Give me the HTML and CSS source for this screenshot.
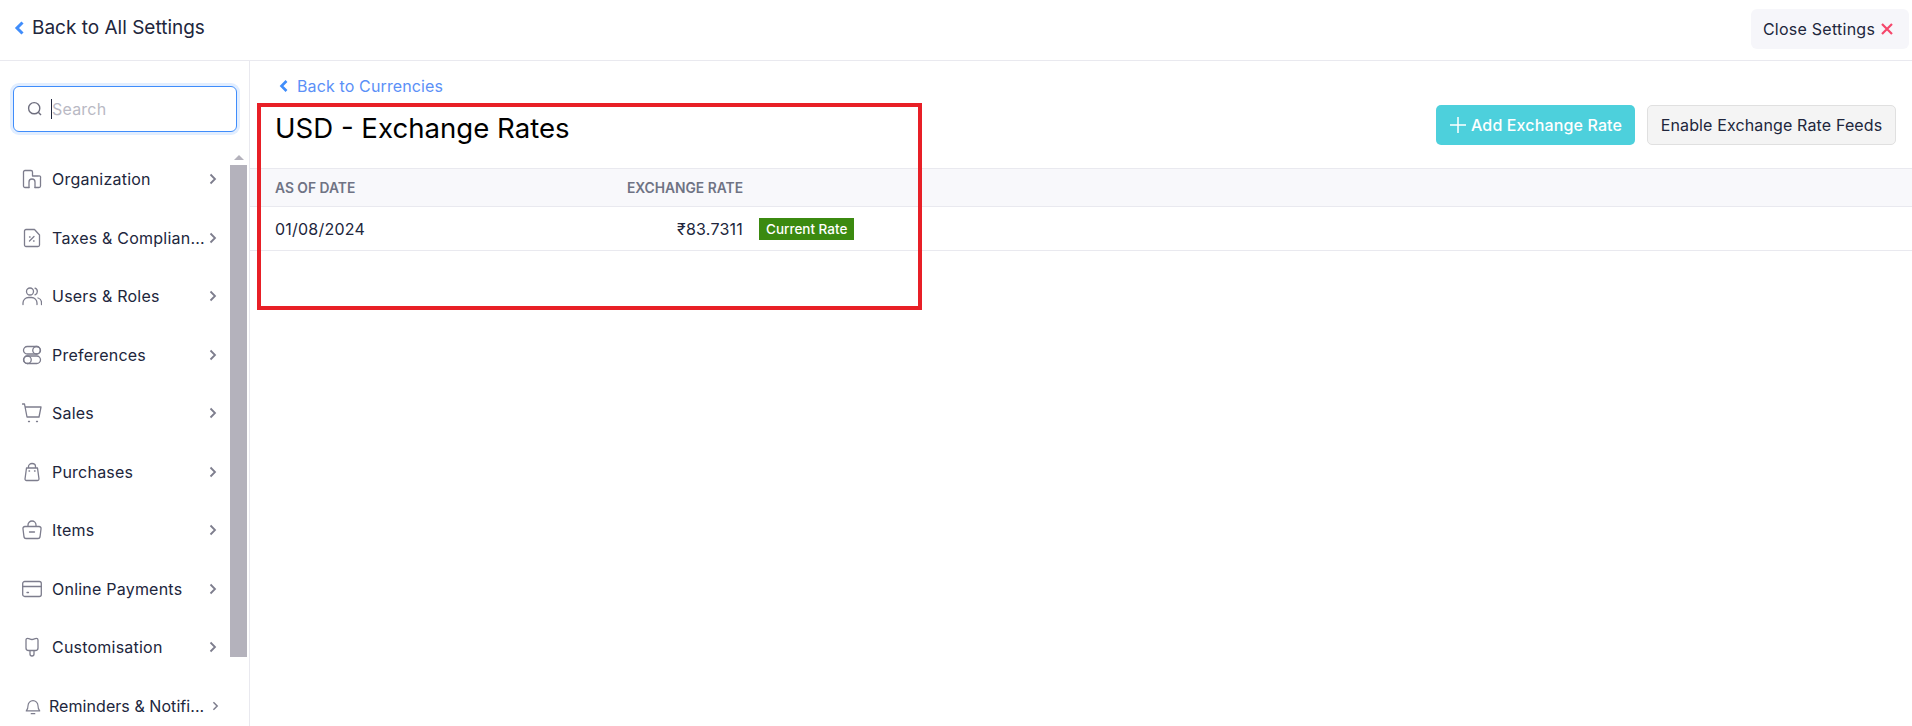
FILE: index.html
```html
<!DOCTYPE html>
<html lang="en">
<head>
<meta charset="utf-8">
<title>USD - Exchange Rates</title>
<link rel="stylesheet" href="styles.css">
</head>
<body>
<header class="topbar">
  <a class="back-all"><svg class="chev-blue" width="10" height="14" viewBox="0 0 10 14"><path d="M8.500 1.500 3 7l5.500 5.500" fill="none" stroke="#408dfb" stroke-width="3"/></svg>Back to All Settings</a>
  <button class="close-btn">Close Settings<svg width="12" height="12" viewBox="0 0 12 12"><path d="M1 1l10 10M11 1 1 11" fill="none" stroke="#f5476b" stroke-width="2.200"/></svg></button>
</header>
<div class="layout">
  <aside class="sidebar">
    <div class="search-wrap">
      <div class="search">
        <svg width="16" height="16" viewBox="0 0 16 16"><circle cx="7.2" cy="7.2" r="5.6" fill="none" stroke="#6e6e7e" stroke-width="1.4"/><path d="M11.3 11.3 14 14" stroke="#6e6e7e" stroke-width="1.4"/></svg>
        <span class="caret"></span><span class="placeholder">Search</span>
      </div>
    </div>
    <div class="nav-wrap">
      <nav class="nav">
        <a class="nav-item"><svg class="ico" viewBox="0 0 20 20"><path d="M7 18.500H3A1.500 1.500 0 0 1 1.500 17V3A1.500 1.500 0 0 1 3 1.500h6A1.500 1.500 0 0 1 10.500 3v4h6A1.500 1.500 0 0 1 18.500 9v8a1.500 1.500 0 0 1-1.500 1.500h-4"/><path d="M7 18.500V13a3 3 0 0 1 6 0v5.500"/></svg><span class="label">Organization</span><svg class="chev" viewBox="0 0 8 12"><path d="M1.500 1.500 6 6l-4.500 4.500"/></svg></a>
        <a class="nav-item"><svg class="ico" viewBox="0 0 20 20"><path d="M2.500 3a1.500 1.500 0 0 1 1.500-1.500h8.500L17.500 7v10a1.500 1.500 0 0 1-1.500 1.500H4A1.500 1.500 0 0 1 2.500 17Z"/><path d="M7.500 13l4.500-4.500"/><path d="M7.500 9h.6M11.500 13h.6"/></svg><span class="label">Taxes &amp; Complian...</span><svg class="chev" viewBox="0 0 8 12"><path d="M1.500 1.500 6 6l-4.500 4.500"/></svg></a>
        <a class="nav-item"><svg class="ico" viewBox="0 0 20 20"><circle cx="8" cy="5.500" r="3.500"/><path d="M1 18.500v-1.500a5.500 5.500 0 0 1 5.500-5.500h3A5.500 5.500 0 0 1 15 17v1.500M13 2.200a3.500 3.500 0 0 1 0 6.600M16 12a5 5 0 0 1 3.500 5v1.500"/></svg><span class="label">Users &amp; Roles</span><svg class="chev" viewBox="0 0 8 12"><path d="M1.500 1.500 6 6l-4.500 4.500"/></svg></a>
        <a class="nav-item"><svg class="ico" viewBox="0 0 20 20"><rect x="1.500" y="1.500" width="17" height="7.500" rx="3.750"/><circle cx="14.500" cy="5.250" r="3.750"/><rect x="1.500" y="11" width="17" height="7.500" rx="3.750"/><circle cx="5.500" cy="14.750" r="3.750"/></svg><span class="label">Preferences</span><svg class="chev" viewBox="0 0 8 12"><path d="M1.500 1.500 6 6l-4.500 4.500"/></svg></a>
        <a class="nav-item"><svg class="ico" viewBox="0 0 20 20"><path d="M.5 1h2l2.500 13h12l2-10H3.500"/><path d="M6.500 18.500h1M14.500 18.500h1"/></svg><span class="label">Sales</span><svg class="chev" viewBox="0 0 8 12"><path d="M1.500 1.500 6 6l-4.500 4.500"/></svg></a>
        <a class="nav-item"><svg class="ico" viewBox="0 0 20 20"><path d="M4.500 6h11L17 17a1.500 1.500 0 0 1-1.500 1.500h-11A1.500 1.500 0 0 1 3 17ZM6.500 6V4.500a3.500 3 0 0 1 7 0V6"/><path d="M7 9h.6M12.500 9h.6"/></svg><span class="label">Purchases</span><svg class="chev" viewBox="0 0 8 12"><path d="M1.500 1.500 6 6l-4.500 4.500"/></svg></a>
        <a class="nav-item"><svg class="ico" viewBox="0 0 20 20"><path d="M3 6.500h14A2 2 0 0 1 19 9l-1 8a2 2 0 0 1-2 1.500H4A2 2 0 0 1 2 17L1 9a2 2 0 0 1 2-2.500ZM6 6.500V5a4 4 0 0 1 8 0v1.500M7.500 12h5"/></svg><span class="label">Items</span><svg class="chev" viewBox="0 0 8 12"><path d="M1.500 1.500 6 6l-4.500 4.500"/></svg></a>
        <a class="nav-item"><svg class="ico" viewBox="0 0 20 20"><rect x=".7" y="2.500" width="18.600" height="15" rx="2"/><path d="M.7 7.500h18.600M5 13.500h1.500"/></svg><span class="label">Online Payments</span><svg class="chev" viewBox="0 0 8 12"><path d="M1.500 1.500 6 6l-4.500 4.500"/></svg></a>
        <a class="nav-item"><svg class="ico" viewBox="0 0 20 20"><path d="M4 3c0-1 .8-1.700 1.700-1.700 1.600 0 2.300 1.200 4.300 1.200s2.700-1.200 4.300-1.200c.9 0 1.700.7 1.700 1.700v8a2.500 2.500 0 0 1-2.500 2.500h-7A2.500 2.500 0 0 1 4 11ZM8 13.500v3.500a2 2 0 0 0 4 0v-3.500"/></svg><span class="label">Customisation</span><svg class="chev" viewBox="0 0 8 12"><path d="M1.500 1.500 6 6l-4.500 4.500"/></svg></a>
        <a class="nav-item nav-item-small"><svg class="ico-small" viewBox="0 0 20 20"><path d="M2.500 15.500c1.500-1.500 2-3 2-6a5.500 5.500 0 0 1 11 0c0 3 .5 4.500 2 6ZM8 18.500h4"/></svg><span class="label">Reminders &amp; Notifi...</span><svg class="chev-small" viewBox="0 0 8 12"><path d="M1.500 1.500 6 6l-4.500 4.500"/></svg></a>
      </nav>
      <div class="scroll-track"><span class="scroll-arrow"></span><span class="scroll-thumb"></span></div>
    </div>
  </aside>
  <main class="content">
    <div class="content-head">
      <div>
        <a class="back-cur"><svg width="9" height="12" viewBox="0 0 9 12"><path d="M7.500 1 2.500 6l5 5" fill="none" stroke="#408dfb" stroke-width="2.600"/></svg>Back to Currencies</a>
        <h1 class="title">USD - Exchange Rates</h1>
      </div>
      <div class="actions">
        <button class="btn-add"><svg width="18" height="18" viewBox="0 0 18 18"><path d="M9 1v16M1 9h16" stroke="#fff" stroke-width="1.500"/></svg>Add Exchange Rate</button>
        <button class="btn-feed">Enable Exchange Rate Feeds</button>
      </div>
    </div>
    <div class="thead">
      <span class="col-date">AS OF DATE</span>
      <span class="col-rate">EXCHANGE RATE</span>
    </div>
    <div class="trow">
      <span class="col-date">01/08/2024</span>
      <span class="col-rate">₹83.7311</span>
      <span class="badge">Current Rate</span>
    </div>
  </main>
</div>
<div class="highlight"></div>
</body>
</html>
```
FILE: styles.css
```css
* { box-sizing: border-box; }
html, body { height: 100%; }
body {
  margin: 0;
  height: 726px;
  overflow: hidden;
  background: #fff;
  color: #21263c;
  font-family: Inter, "Noto Sans", sans-serif;
  font-optical-sizing: none;
  font-size: 16px;
}
svg { display: block; flex: none; }
button { font-family: inherit; font-optical-sizing: none; cursor: pointer; }

.topbar {
  height: 61px;
  border-bottom: 1px solid #e9e9ef;
  display: flex;
  align-items: center;
  justify-content: space-between;
  padding: 0 3px 0 14px;
}
.back-all {
  display: flex;
  align-items: center;
  gap: 8px;
  font-size: 19px;
  margin-top: -5px;
}
.close-btn {
  height: 40px;
  width: 158px;
  margin-top: -3px;
  padding: 0 4px 0 0;
  border: 0;
  border-radius: 6px;
  background: #f6f6fa;
  color: #21263c;
  font-size: 16px;
  letter-spacing: .25px;
  display: flex;
  align-items: center;
  justify-content: center;
  gap: 6px;
}

.layout { display: flex; height: 665px; }
.sidebar {
  width: 250px;
  flex: none;
  border-right: 1px solid #e9e9ef;
  overflow: hidden;
}
.search-wrap { padding: 25px 12px 0 13px; }
.search {
  height: 46px;
  border: 1px solid #408dfb;
  border-radius: 6px;
  box-shadow: 0 0 0 3px #e2eeff;
  display: flex;
  align-items: center;
  padding-left: 13px;
}
.caret { width: 1px; height: 20px; background: #21263c; margin-left: 8px; }
.placeholder { color: #b9b9c4; font-size: 16px; letter-spacing: .2px; }

.nav-wrap { display: flex; margin-top: 18px; }
.nav { width: 230px; flex: none; }
.nav-item {
  height: 58.5px;
  display: flex;
  align-items: center;
  padding: 0 13px 0 22px;
  font-size: 16px;
  letter-spacing: .22px;
}
.ico, .ico-small {
  fill: none;
  stroke: #7d7d8d;
  stroke-width: 1.300;
  stroke-linecap: round;
  stroke-linejoin: round;
}
.ico { width: 20px; height: 20px; margin-right: 10px; }
.ico-small { width: 18px; height: 18px; margin-right: 7px; }
.label { flex: 1; white-space: nowrap; }
.chev, .chev-small {
  fill: none;
  stroke: #7d7d8d;
  stroke-width: 1.800;
}
.chev { width: 8px; height: 12px; }
.chev-small { width: 7px; height: 10px; margin-right: -2px; }
.nav-item-small { padding-left: 24px; letter-spacing: .06px; }

.scroll-track { width: 17px; flex: none; display: flex; flex-direction: column; align-items: center; }
.scroll-arrow {
  margin-top: 5px;
  width: 0;
  height: 0;
  border-left: 5px solid transparent;
  border-right: 5px solid transparent;
  border-bottom: 5px solid #b4b2bc;
}
.scroll-thumb { width: 17px; height: 492px; margin-top: 5px; background: #b4b2bc; }

.content { flex: 1; min-width: 0; }
.content-head {
  height: 107px;
  display: flex;
  justify-content: space-between;
  padding: 15px 16px 0 25px;
}
.back-cur {
  display: flex;
  align-items: center;
  gap: 9px;
  margin-left: 4px;
  color: #5b90f7;
  font-size: 16px;
  letter-spacing: .13px;
  line-height: 20px;
}
.title {
  margin: 15px 0 0;
  color: #000;
  font-size: 27.600px;
  font-weight: 400;
  line-height: 34px;
}
.actions { display: flex; gap: 12px; padding-top: 29px; align-items: flex-start; }
.btn-add, .btn-feed {
  height: 40px;
  border-radius: 5px;
  font-size: 16px;
  letter-spacing: .14px;
  display: flex;
  align-items: center;
}
.btn-add {
  width: 199px;
  border: 0;
  background: #4dd0dc;
  color: #fff;
  font-weight: 500;
  padding: 0 0 0 13px;
  gap: 4px;
}
.btn-feed {
  width: 249px;
  justify-content: center;
  background: #f4f4f4;
  border: 1px solid #e0e0e0;
  color: #21263c;
}

.thead, .trow { display: flex; align-items: center; padding-left: 25px; border-bottom: 1px solid #e9e9ef; }
.thead {
  height: 39px;
  border-top: 1px solid #e9e9ef;
  background: #f8f8fb;
  color: #6f7384;
  font-size: 13.800px;
  font-weight: 600;
}
.trow { height: 44px; color: #21263c; font-size: 16px; letter-spacing: .22px; }
.col-date { width: 200px; white-space: nowrap; }
.col-rate { width: 268px; text-align: right; white-space: nowrap; }
.badge {
  margin-left: 16px;
  height: 22px;
  padding: 0 7px;
  background: #3b8a10;
  color: #fff;
  font-size: 13.500px;
  font-weight: 500;
  letter-spacing: 0;
  line-height: 22px;
}

.highlight {
  position: absolute;
  left: 257px;
  top: 103px;
  width: 665px;
  height: 207px;
  border: 4px solid #e81f26;
}
```
